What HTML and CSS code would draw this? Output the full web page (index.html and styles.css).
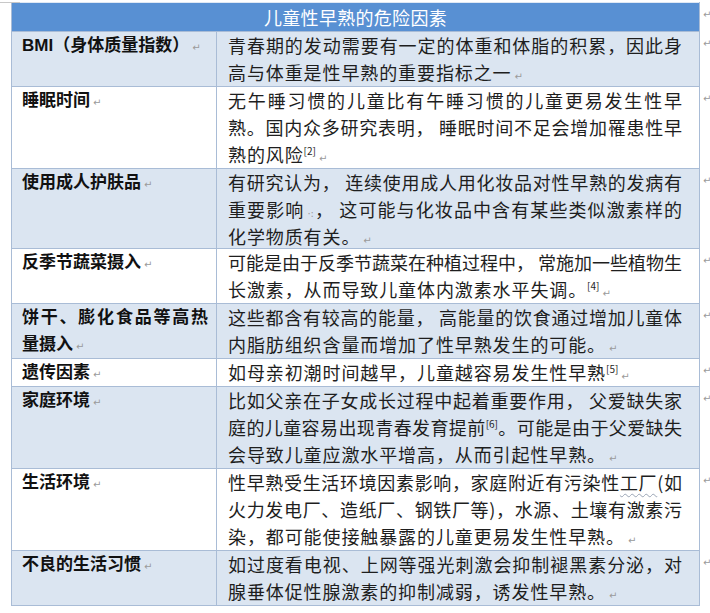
FILE: index.html
```html
<!DOCTYPE html>
<html lang="zh">
<head>
<meta charset="utf-8">
<title>儿童性早熟的危险因素</title>
<link rel="stylesheet" href="styles.css">
</head>
<body>
<div class="handle"></div>
<table class="risk">
  <colgroup><col class="c1"><col class="c2"><col class="c3"></colgroup>
  <tr class="head">
    <th colspan="2">儿童性早熟的危险因素</th>
    <td class="mark">↵</td>
  </tr>
  <tr class="blue">
    <td class="k"><span class="line">BMI（身体质量指数）<i class="p">↵</i></span></td>
    <td class="v"><span class="line full">青春期的发动需要有一定的体重和体脂的积累，因此身</span><span class="line">高与体重是性早熟的重要指标之一<i class="p">↵</i></span></td>
    <td class="mark">↵</td>
  </tr>
  <tr>
    <td class="k"><span class="line">睡眠时间<i class="p">↵</i></span></td>
    <td class="v"><span class="line full">无午睡习惯的儿童比有午睡习惯的儿童更易发生性早</span><span class="line full">熟。国内众多研究表明， 睡眠时间不足会增加罹患性早</span><span class="line">熟的风险<sup>[2]</sup><i class="p">↵</i></span></td>
    <td class="mark">↵</td>
  </tr>
  <tr class="blue">
    <td class="k"><span class="line">使用成人护肤品<i class="p">↵</i></span></td>
    <td class="v"><span class="line full">有研究认为， 连续使用成人用化妆品对性早熟的发病有</span><span class="line full">重要影响<i class="p">·:</i>， 这可能与化妆品中含有某些类似激素样的</span><span class="line short">化学物质有关。<i class="p">↵</i></span></td>
    <td class="mark">↵</td>
  </tr>
  <tr>
    <td class="k"><span class="line">反季节蔬菜摄入<i class="p">↵</i></span></td>
    <td class="v"><span class="line full">可能是由于反季节蔬菜在种植过程中， 常施加一些植物生</span><span class="line">长激素，从而导致儿童体内激素水平失调。<sup>[4]</sup><i class="p">↵</i></span></td>
    <td class="mark">↵</td>
  </tr>
  <tr class="blue">
    <td class="k"><span class="line full">饼干、膨化食品等高热</span><span class="line">量摄入<i class="p">↵</i></span></td>
    <td class="v"><span class="line full">这些都含有较高的能量， 高能量的饮食通过增加儿童体</span><span class="line">内脂肪组织含量而增加了性早熟发生的可能。<i class="p">↵</i></span></td>
    <td class="mark">↵</td>
  </tr>
  <tr>
    <td class="k"><span class="line">遗传因素<i class="p">↵</i></span></td>
    <td class="v"><span class="line">如母亲初潮时间越早，儿童越容易发生性早熟<sup>[5]</sup><i class="p">↵</i></span></td>
    <td class="mark">↵</td>
  </tr>
  <tr class="blue">
    <td class="k"><span class="line">家庭环境<i class="p">↵</i></span></td>
    <td class="v"><span class="line full">比如父亲在子女成长过程中起着重要作用， 父爱缺失家</span><span class="line full">庭的儿童容易出现青春发育提前<sup>[6]</sup>。可能是由于父爱缺失</span><span class="line">会导致儿童应激水平增高，从而引起性早熟。<i class="p">↵</i></span></td>
    <td class="mark">↵</td>
  </tr>
  <tr>
    <td class="k"><span class="line">生活环境<i class="p">↵</i></span></td>
    <td class="v"><span class="line full">性早熟受生活环境因素影响，家庭附近有污染性<u class="wavy">工厂</u>(如</span><span class="line full">火力发电厂、造纸厂、钢铁厂等)，水源、土壤有激素污</span><span class="line">染，都可能使接触暴露的儿童更易发生性早熟。<i class="p">↵</i></span></td>
    <td class="mark">↵</td>
  </tr>
  <tr class="blue">
    <td class="k"><span class="line">不良的生活习惯<i class="p">↵</i></span></td>
    <td class="v"><span class="line full">如过度看电视、上网等强光刺激会抑制褪黑素分泌，对</span><span class="line">腺垂体促性腺激素的抑制减弱，诱发性早熟。<i class="p">↵</i></span></td>
    <td class="mark">↵</td>
  </tr>
</table>
</body>
</html>
```

FILE: styles.css
```css
html, body {
  margin: 0;
  padding: 0;
  background: #ffffff;
}

body {
  padding: 2px 0 0 11px;
  font-family: "Noto Sans CJK SC", "Noto Sans", sans-serif;
  color: #1c1c1c;
  position: relative;
}

.handle {
  position: absolute;
  left: 0;
  top: 2px;
  width: 20px;
  height: 1px;
  background: #c8c8c8;
}

.risk {
  border-collapse: collapse;
  table-layout: fixed;
  width: 700px;
}

.c1 { width: 205px; }
.c2 { width: 483px; }
.c3 { width: 12px; }

.risk th,
.risk td {
  padding: 0;
  vertical-align: top;
}

.risk th,
.risk td.k,
.risk td.v {
  border: 1px solid #a9bcd6;
}

.head th {
  background: #5890d3;
  color: #ffffff;
  font-weight: 400;
  font-size: 18px;
  line-height: 28px;
  height: 28px;
  text-align: center;
  letter-spacing: 0.3px;
  border-top-color: #dfe8f4;
}

.blue td.k,
.blue td.v {
  background: #dbe5f1;
}

.line {
  display: block;
  height: 27px;
  line-height: 27px;
  white-space: nowrap;
  overflow: visible;
}

.line.short {
  height: 25px;
}

.line.full {
  text-align: justify;
  text-align-last: justify;
  letter-spacing: 0;
}

td.k {
  padding: 0 8px 0 10px;
  font-family: "Liberation Sans", "Noto Sans CJK SC", sans-serif;
  font-weight: 700;
  font-size: 17px;
  color: #111111;
}

td.v {
  padding: 0 17px 0 11px;
  font-size: 18px;
  letter-spacing: 0.9px;
  color: #1e1e1e;
}

sup {
  font-size: 10px;
  line-height: 0;
  vertical-align: 7px;
  letter-spacing: 0;
}

.p {
  font-style: normal;
  font-weight: 400;
  font-size: 10px;
  line-height: 0;
  color: #9a9a9a;
  margin-left: 3px;
  letter-spacing: 0;
  font-family: "DejaVu Sans", sans-serif;
}

td.mark {
  border: none;
  background: transparent;
  font-family: "DejaVu Sans", sans-serif;
  font-size: 10px;
  color: #9a9a9a;
  line-height: 24px;
  padding-left: 3px;
}

.wavy {
  text-decoration: underline wavy #9aa5b5;
  text-decoration-thickness: 1px;
  text-underline-offset: 3px;
}
```
